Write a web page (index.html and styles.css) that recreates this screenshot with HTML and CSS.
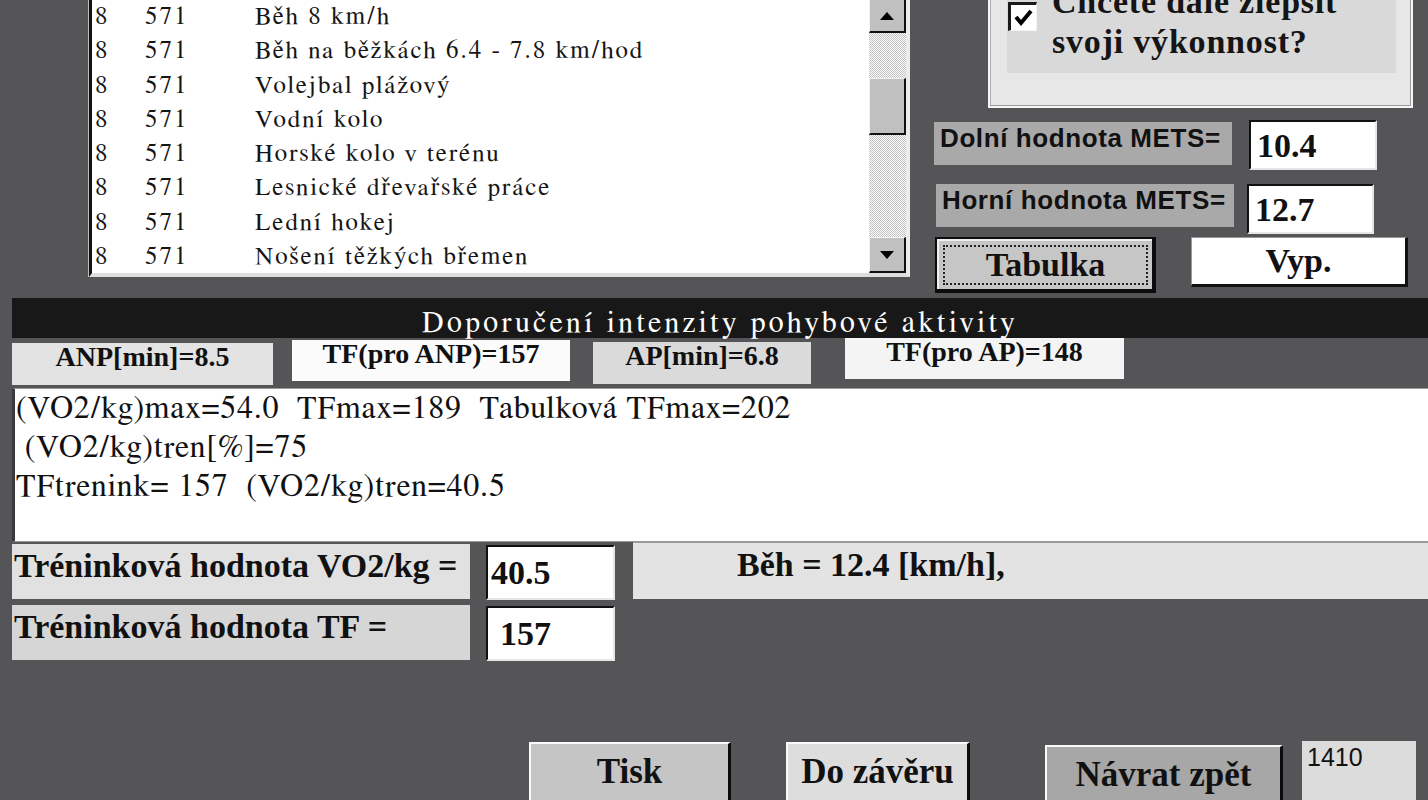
FILE: index.html
```html
<!DOCTYPE html>
<html lang="cs">
<head>
<meta charset="utf-8">
<title>Doporučení intenzity pohybové aktivity</title>
<link rel="stylesheet" href="styles.css">
</head>
<body>
<div class="screen">
  <div class="top">
    <div class="list">
      <div class="rows">
        <div class="row"><span>8</span><span>571</span><span>Běh 8 km/h</span></div>
        <div class="row"><span>8</span><span>571</span><span>Běh na běžkách 6.4 - 7.8 km/hod</span></div>
        <div class="row"><span>8</span><span>571</span><span>Volejbal plážový</span></div>
        <div class="row"><span>8</span><span>571</span><span>Vodní kolo</span></div>
        <div class="row"><span>8</span><span>571</span><span>Horské kolo v terénu</span></div>
        <div class="row"><span>8</span><span>571</span><span>Lesnické dřevařské práce</span></div>
        <div class="row"><span>8</span><span>571</span><span>Lední hokej</span></div>
        <div class="row"><span>8</span><span>571</span><span>Nošení těžkých břemen</span></div>
      </div>
      <div class="scrollbar">
        <div class="sb-btn sb-up"><svg width="14" height="8" viewBox="0 0 14 8"><polygon points="0,8 7,0 14,8" fill="#000"/></svg></div>
        <div class="sb-track"><div class="sb-thumb"></div></div>
        <div class="sb-btn sb-down"><svg width="14" height="8" viewBox="0 0 14 8"><polygon points="0,0 14,0 7,8" fill="#000"/></svg></div>
      </div>
    </div>
    <div class="side">
      <div class="panel">
        <div class="panel-inner">
          <div class="checkbox"><svg width="22" height="22" viewBox="0 0 22 22"><path d="M3 10 L8 16 L18 4" fill="none" stroke="#000" stroke-width="4"/></svg></div>
          <div class="question">Chcete dále zlepšit<br>svoji výkonnost?</div>
        </div>
      </div>
      <div class="mets mets-low">
        <div class="mets-label">Dolní hodnota METS=</div>
        <div class="field mets-field">10.4</div>
      </div>
      <div class="mets mets-high">
        <div class="mets-label">Horní hodnota METS=</div>
        <div class="field mets-field">12.7</div>
      </div>
      <div class="side-buttons">
        <div class="btn-default"><div class="focus">Tabulka</div></div>
        <div class="btn-white">Vyp.</div>
      </div>
    </div>
  </div>

  <div class="title">Doporučení intenzity pohybové aktivity</div>

  <div class="stats">
    <div class="stat stat-anp">ANP[min]=8.5</div>
    <div class="stat stat-tfanp">TF(pro ANP)=157</div>
    <div class="stat stat-ap">AP[min]=6.8</div>
    <div class="stat stat-tfap">TF(pro AP)=148</div>
  </div>

  <div class="output">(VO2/kg)max=54.0  TFmax=189  Tabulková TFmax=202
 (VO2/kg)tren[%]=75
TFtrenink= 157  (VO2/kg)tren=40.5</div>

  <div class="result-row result-row-1">
    <div class="res-label res-label-1">Tréninková hodnota VO2/kg =</div>
    <div class="field res-field res-field-1">40.5</div>
    <div class="speed">Běh = 12.4 [km/h],</div>
  </div>
  <div class="result-row result-row-2">
    <div class="res-label res-label-2">Tréninková hodnota TF =</div>
    <div class="field res-field res-field-2">157</div>
  </div>

  <div class="actions">
    <div class="btn btn-tisk">Tisk</div>
    <div class="btn btn-zaver">Do závěru</div>
    <div class="btn btn-zpet">Návrat zpět</div>
    <div class="counter">1410</div>
  </div>
</div>
</body>
</html>
```

FILE: styles.css
```css
* { box-sizing: border-box; }
html, body { margin: 0; padding: 0; }
body {
  background: #555557;
  width: 1428px;
  height: 800px;
  overflow: hidden;
  font-family: "Liberation Serif", serif;
  color: #111;
}
.screen { display: flex; flex-direction: column; }

/* ---------- top ---------- */
.top { display: flex; align-items: flex-start; height: 298px; }

.list {
  margin-left: 89px;
  width: 821px;
  height: 277px;
  display: flex;
  background: #fff;
  border-left: 3px solid #111;
  border-right: 4px solid #ececec;
  border-bottom: 4px solid #dedede;
  box-shadow: -1px 0 0 #bdbdbd;
}
.rows { flex: 1; padding-left: 3px; }
.row {
  display: grid;
  grid-template-columns: 50px 110px 1fr;
  height: 34.3px;
  line-height: 34.3px;
  font-family: "FreeSerif", "DejaVu Serif", serif;
  font-size: 25px;
  letter-spacing: 2px;
  color: #151515;
  white-space: nowrap;
}

.scrollbar {
  width: 37px;
  display: flex;
  flex-direction: column;
  background: repeating-conic-gradient(#c4c4c4 0 25%, #fafafa 0 50%) 0 0 / 2px 2px;
}
.sb-btn {
  background: #c0c0c0;
  border-left: 1px solid #f4f4f4;
  border-top: 1px solid #f4f4f4;
  border-right: 2px solid #111;
  border-bottom: 2px solid #111;
  display: flex;
  align-items: center;
  justify-content: center;
}
.sb-up { height: 33px; border-top: none; }
.sb-down { height: 36px; }
.sb-track { flex: 1; }
.sb-thumb {
  margin-top: 45px;
  height: 57px;
  background: #c0c0c0;
  border-left: 1px solid #f4f4f4;
  border-top: 1px solid #f4f4f4;
  border-right: 2px solid #111;
  border-bottom: 2px solid #111;
}

.side { margin-left: 24px; width: 494px; display: flex; flex-direction: column; }

.panel {
  margin-left: 54px;
  margin-top: -40px;
  width: 425px;
  height: 148px;
  background: #e7e7e7;
  border: 2px solid #f6f6f6;
  box-shadow: inset -1px -1px 0 #9a9a9a, inset 1px 0 0 #b0b0b0;
  padding: 0 15px 33px 17px;
}
.panel-inner {
  height: 111px;
  background: #d9d9d9;
  display: flex;
  align-items: flex-start;
}
.checkbox {
  margin-top: 40px;
  margin-left: 1px;
  width: 29px;
  height: 29px;
  background: #fff;
  border-top: 3px solid #1a1a1a;
  border-left: 3px solid #1a1a1a;
  border-right: 1px solid #f4f4f4;
  border-bottom: 1px solid #f4f4f4;
  display: flex;
  align-items: center;
  justify-content: center;
}
.question {
  margin-left: 15px;
  padding-top: 20px;
  font-size: 34px;
  font-weight: bold;
  line-height: 40px;
  letter-spacing: 0.8px;
  color: #151515;
  white-space: nowrap;
}

.mets { display: flex; align-items: flex-start; }
.mets-low { margin-top: 12px; }
.mets-high { margin-top: 14px; }
.mets-label {
  width: 298px;
  height: 43px;
  background: #a9a9a9;
  font-family: "Liberation Sans", Arial, sans-serif;
  font-weight: bold;
  font-size: 26px;
  line-height: 30px;
  padding: 1px 0 0 6px;
  letter-spacing: 0.6px;
  color: #111;
  white-space: nowrap;
}
.mets-low .mets-label { margin-top: 2px; }
.mets-high .mets-label { margin-left: 2px; }
.field {
  background: #fff;
  border-top: 2px solid #111;
  border-left: 2px solid #111;
  border-right: 2px solid #e6e6e6;
  border-bottom: 2px solid #e6e6e6;
  font-weight: bold;
  font-size: 34px;
  color: #111;
}
.mets-field { height: 50px; line-height: 48px; padding-left: 6px; }
.mets-low .mets-field { margin-left: 17px; width: 128px; }
.mets-high .mets-field { margin-left: 13px; width: 127px; }

.side-buttons { display: flex; align-items: flex-start; margin-top: 3px; }
.btn-default {
  margin-left: 1px;
  width: 221px;
  height: 56px;
  background: #c6c6c6;
  border: 2px solid #0c0c0c;
  border-right-width: 4px;
  border-bottom-width: 4px;
  box-shadow: inset 2px 2px 0 #f0f0f0;
  padding: 6px 4px 4px 6px;
}
.focus {
  height: 100%;
  border: 2px dotted #222;
  text-align: center;
  font-size: 34px;
  font-weight: bold;
  line-height: 36px;
  color: #111;
}
.btn-white {
  margin-left: 35px;
  width: 217px;
  height: 50px;
  background: #fff;
  border-top: 1px solid #9a9a9a;
  border-left: 1px solid #9a9a9a;
  border-right: 3px solid #111;
  border-bottom: 3px solid #111;
  text-align: center;
  font-size: 34px;
  font-weight: bold;
  line-height: 46px;
  color: #111;
}

/* ---------- title ---------- */
.title {
  margin-left: 12px;
  height: 40px;
  background: #181818;
  color: #fff;
  text-align: center;
  font-family: "FreeSerif", "DejaVu Serif", serif;
  font-size: 30px;
  letter-spacing: 3.4px;
  line-height: 40px;
  padding-top: 5px;
  white-space: nowrap;
}

/* ---------- stats ---------- */
.stats { display: flex; align-items: flex-start; height: 50px; }
.stat {
  position: relative;
  font-weight: bold;
  font-size: 28px;
  line-height: 28px;
  text-align: center;
  color: #111;
  white-space: nowrap;
}
.stat-anp { margin-left: 12px; margin-top: 5px; width: 261px; height: 42px; background: #e3e3e3; }
.stat-tfanp { margin-left: 19px; margin-top: 2px; width: 278px; height: 41px; background: #fbfbfb; }
.stat-ap { margin-left: 23px; margin-top: 4px; width: 218px; height: 42px; background: #dadada; }
.stat-tfap { margin-left: 34px; margin-top: 0; width: 279px; height: 41px; background: #f4f4f4; }

/* ---------- output ---------- */
.output {
  margin-left: 12px;
  height: 154px;
  background: #fff;
  border-left: 3px solid #3a3a3a;
  border-top: 1px solid #9a9a9a;
  border-bottom: 1px solid #9a9a9a;
  padding: 0 0 0 1px;
  white-space: pre;
  font-family: "FreeSerif", "DejaVu Serif", serif;
  font-size: 32px;
  letter-spacing: 0.8px;
  line-height: 39px;
  color: #111;
}

/* ---------- results ---------- */
.result-row { display: flex; align-items: flex-start; }
.result-row-1 { height: 63px; }
.result-row-2 { height: 56px; }
.res-label {
  margin-left: 12px;
  width: 458px;
  height: 55px;
  padding: 2px 0 0 2px;
  font-weight: bold;
  font-size: 34px;
  line-height: 40px;
  color: #111;
  white-space: nowrap;
}
.res-label-1 { margin-top: 2px; background: #e1e1e1; }
.res-label-2 { background: #d6d6d6; }
.res-field { margin-left: 16px; width: 129px; height: 55px; line-height: 51px; }
.res-field-1 { margin-top: 3px; padding-left: 3px; }
.res-field-2 { margin-top: 1px; padding-left: 12px; }
.speed {
  margin-left: 18px;
  width: 795px;
  height: 57px;
  background: #e3e3e3;
  border-top: 1px solid #9a9a9a;
  padding: 2px 0 0 104px;
  font-weight: bold;
  font-size: 34px;
  line-height: 40px;
  color: #111;
  white-space: nowrap;
}

/* ---------- actions ---------- */
.actions { display: flex; align-items: flex-start; margin-top: 80px; }
.btn {
  height: 64px;
  border-top: 2px solid #fafafa;
  border-left: 2px solid #fafafa;
  border-right: 3px solid #0c0c0c;
  border-bottom: 3px solid #0c0c0c;
  padding-top: 8px;
  text-align: center;
  font-weight: bold;
  font-size: 35px;
  line-height: 40px;
  color: #111;
  white-space: nowrap;
}
.btn-tisk { margin-left: 529px; margin-top: 1px; width: 202px; background: #c5c5c5; }
.btn-zaver { margin-left: 55px; margin-top: 1px; width: 184px; background: #dddddd; }
.btn-zpet { margin-left: 75px; margin-top: 4px; width: 238px; background: #a7a7a7; }
.counter {
  margin-left: 19px;
  width: 114px;
  height: 64px;
  background: #dcdcdc;
  padding: 2px 0 0 5px;
  font-family: "Liberation Sans Narrow", "Liberation Sans", Arial, sans-serif;
  font-size: 25px;
  line-height: 28px;
  color: #111;
}
```
